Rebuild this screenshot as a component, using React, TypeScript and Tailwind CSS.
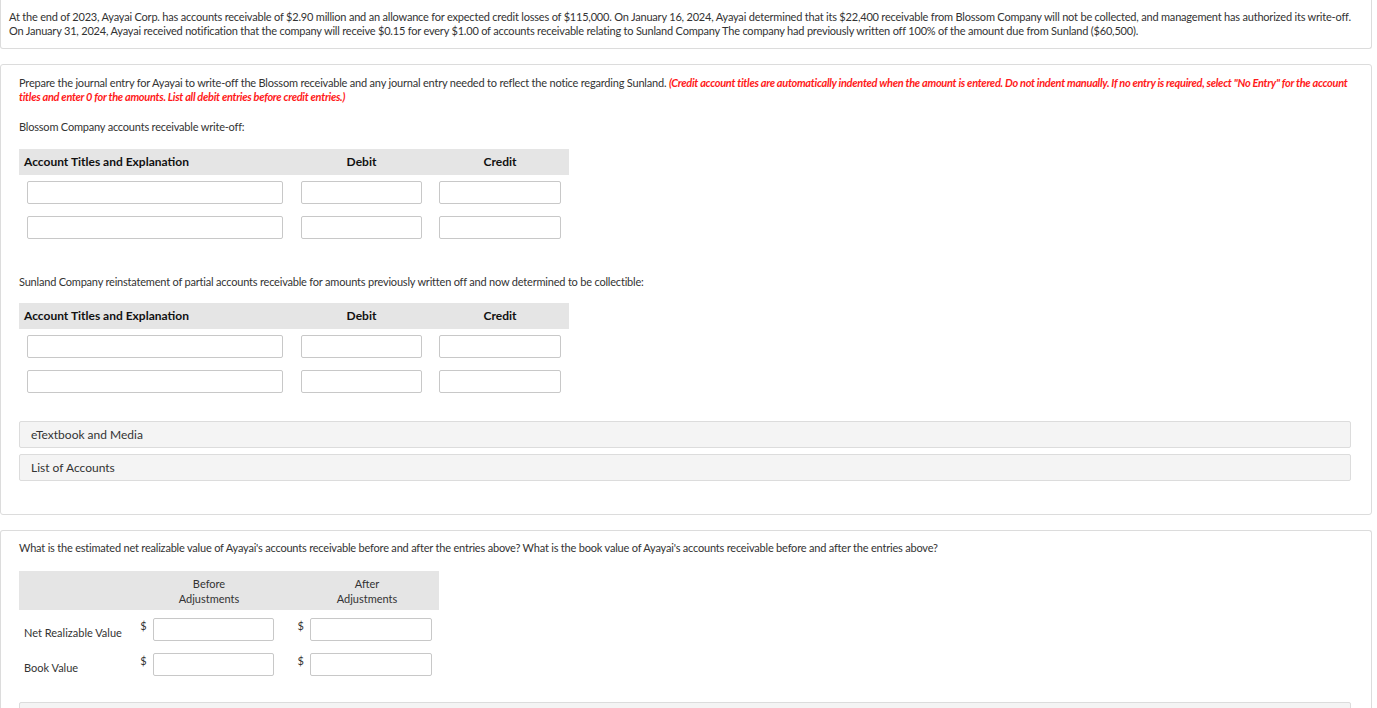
import React from 'react';

const font = { fontFamily: 'Lato, "Open Sans", sans-serif' };

function TextBox({ className = '' }: { className?: string }) {
  return (
    <input
      type="text"
      className={`h-[23px] border border-[#c8c8c8] rounded-[2px] bg-white outline-none ${className}`}
    />
  );
}

// Journal entry table with header and two blank rows
function JournalTable() {
  return (
    <div className="w-[550px]">
      <div className="flex items-center h-[26px] pl-[8px] bg-[#e5e5e5] text-[12px] font-bold text-[#111]">
        <div className="w-[256px] -ml-[3px]">Account Titles and Explanation</div>
        <div className="w-[121px] ml-[21px] text-center">Debit</div>
        <div className="w-[122px] ml-[17px] text-center">Credit</div>
      </div>
      <div className="flex items-center pl-[8px] mt-[6px]">
        <TextBox className="w-[256px]" />
        <TextBox className="w-[121px] ml-[18px]" />
        <TextBox className="w-[122px] ml-[17px]" />
      </div>
      <div className="flex items-center pl-[8px] mt-[12px]">
        <TextBox className="w-[256px]" />
        <TextBox className="w-[121px] ml-[18px]" />
        <TextBox className="w-[122px] ml-[17px]" />
      </div>
    </div>
  );
}

function Collapsible({ label }: { label: string }) {
  return (
    <div className="h-[27px] flex items-center pl-[11px] bg-[#f4f4f4] border border-[#dcdcdc] rounded-[2px] text-[12px] text-[#333]">
      {label}
    </div>
  );
}

function ValueRow({ label }: { label: string }) {
  return (
    <div className="flex h-[35px] text-[11px] leading-[14px] text-[#333]">
      <div className="w-[115px] pl-[5px] pt-[16px]">{label}</div>
      <div className="w-[19px] pt-[9px] text-center">$</div>
      <div className="pt-[8px]">
        <TextBox className="w-[121px]" />
      </div>
      <div className="w-[36px] pt-[9px] pr-[6px] text-right">$</div>
      <div className="pt-[8px]">
        <TextBox className="w-[122px]" />
      </div>
    </div>
  );
}

export default function App() {
  return (
    <div className="min-h-[708px] bg-white text-[#333] overflow-hidden" style={font}>
      <div className="w-[1372px]">
        {/* Problem statement */}
        <div className="border border-t-0 border-[#dcdcdc] rounded-b-[3px] px-[8px] pt-[10px] h-[49px] text-[11px] leading-[14px] tracking-[-0.2px]">
          <div className="whitespace-nowrap">
            At the end of 2023, Ayayai Corp. has accounts receivable of $2.90 million and an allowance for expected credit losses of $115,000. On January 16, 2024, Ayayai determined that its $22,400 receivable from Blossom Company will not be collected, and management has authorized its write-off.
          </div>
          <div className="whitespace-nowrap">
            On January 31, 2024, Ayayai received notification that the company will receive $0.15 for every $1.00 of accounts receivable relating to Sunland Company The company had previously written off 100% of the amount due from Sunland ($60,500).
          </div>
        </div>

        {/* Journal entries */}
        <div className="mt-[15px] border border-[#dcdcdc] rounded-[3px] pl-[18px] pr-[20px] pt-[11px] h-[451px]">
          <div className="text-[11px] leading-[14px] tracking-[-0.2px]">
            <div className="whitespace-nowrap">
              Prepare the journal entry for Ayayai to write-off the Blossom receivable and any journal entry needed to reflect the notice regarding Sunland.{' '}
              <span className="text-[#ff1a1a] font-bold italic tracking-[-0.3px]">
                (Credit account titles are automatically indented when the amount is entered. Do not indent manually. If no entry is required, select "No Entry" for the account
              </span>
            </div>
            <div className="whitespace-nowrap text-[#ff1a1a] font-bold italic tracking-[-0.3px]">
              titles and enter 0 for the amounts. List all debit entries before credit entries.)
            </div>
          </div>

          <div className="mt-[16px] text-[11px] leading-[14px] tracking-[-0.2px]">Blossom Company accounts receivable write-off:</div>
          <div className="mt-[15px]">
            <JournalTable />
          </div>

          <div className="mt-[36px] text-[11px] leading-[14px] tracking-[-0.2px]">
            Sunland Company reinstatement of partial accounts receivable for amounts previously written off and now determined to be collectible:
          </div>
          <div className="mt-[14px]">
            <JournalTable />
          </div>

          <div className="mt-[28px] flex flex-col gap-[6px]">
            <Collapsible label="eTextbook and Media" />
            <Collapsible label="List of Accounts" />
          </div>
        </div>

        {/* Net realizable value */}
        <div className="mt-[15px] border border-b-0 border-[#dcdcdc] rounded-t-[3px] pl-[18px] pr-[20px] pt-[10px] h-[200px]">
          <div className="text-[11px] leading-[14px] tracking-[-0.2px] whitespace-nowrap">
            What is the estimated net realizable value of Ayayai's accounts receivable before and after the entries above? What is the book value of Ayayai's accounts receivable before and after the entries above?
          </div>
          <div className="mt-[16px] w-[420px] h-[39px] bg-[#e5e5e5] flex items-center text-[11px] leading-[15px] text-[#333]">
            <div className="w-[120px]" />
            <div className="w-[140px] text-center">Before<br />Adjustments</div>
            <div className="w-[18px]" />
            <div className="w-[140px] text-center">After<br />Adjustments</div>
          </div>
          <ValueRow label="Net Realizable Value" />
          <ValueRow label="Book Value" />
          <div className="mt-[22px] h-[20px] bg-[#f4f4f4] border border-[#dcdcdc] rounded-[2px]" />
        </div>
      </div>
    </div>
  );
}
